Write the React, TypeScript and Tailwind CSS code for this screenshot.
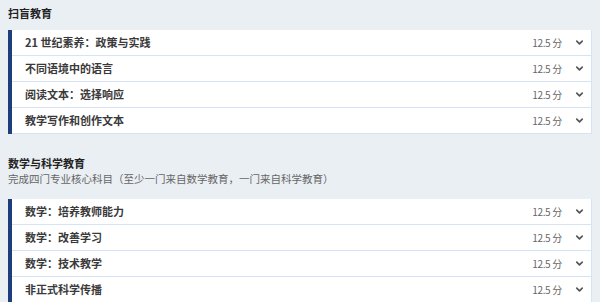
import { ChevronDown } from 'lucide-react';

const literacy = ['21 世纪素养：政策与实践', '不同语境中的语言', '阅读文本：选择响应', '教学写作和创作文本'];
const mathSci = ['数学：培养教师能力', '数学：改善学习', '数学：技术教学', '非正式科学传播'];

function CourseList({ items }: { items: string[] }) {
  return (
    <div className="border-l-[4px] border-l-[#1d3d7c] border-r border-r-[#d5e3f4] bg-white">
      {items.map((name) => (
        <div key={name} className="flex h-[26px] items-center border-b border-[#d5e3f4] pl-[13px] pr-[6px]">
          <span className="flex-1 text-[11px] font-semibold text-[#3a3a3a]">{name}</span>
          <span className="text-[10px] tracking-[-0.3px] text-[#666]">12.5 分</span>
          <ChevronDown className="ml-[12px] h-[11px] w-[11px] text-[#555]" strokeWidth={3.5} />
        </div>
      ))}
    </div>
  );
}

export default function App() {
  return (
    <div className="h-[302px] w-[600px] overflow-hidden bg-[#eaeff3] px-[8px] pt-[5px] font-['Noto_Sans_CJK_SC','Noto_Sans',sans-serif]">
      <h2 className="mb-[9px] text-[11px] font-bold leading-[16px] text-[#222]">扫盲教育</h2>
      <CourseList items={literacy} />
      <h2 className="mt-[21px] text-[11px] font-bold leading-[16px] text-[#222]">数学与科学教育</h2>
      <p className="mb-[13px] text-[10.5px] leading-[15px] text-[#666]">完成四门专业核心科目（至少一门来自数学教育，一门来自科学教育）</p>
      <CourseList items={mathSci} />
    </div>
  );
}
